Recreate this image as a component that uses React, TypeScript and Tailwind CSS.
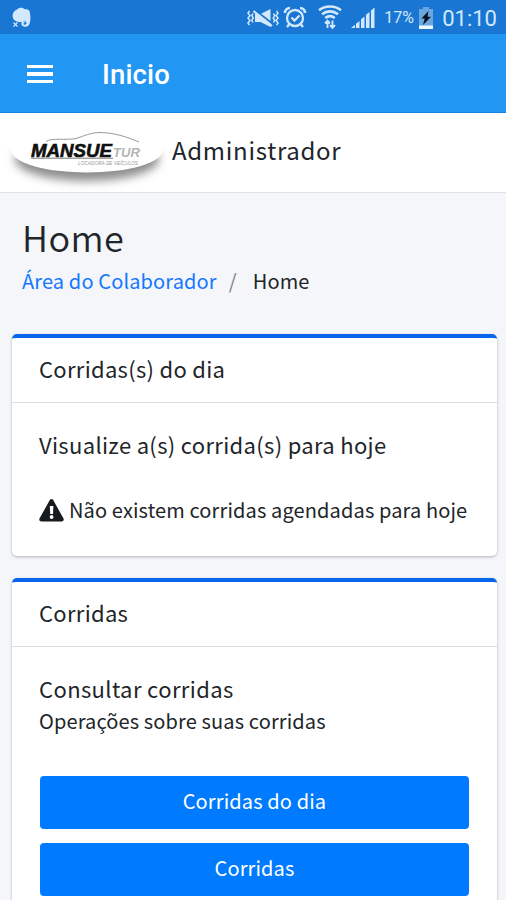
import type { ReactNode } from 'react';

function StatusBar() {
  return (
    <div className="flex h-[34px] items-center justify-between bg-[#1976d2] pl-3 pr-[9px] text-[#d3e8fc]">
      <svg viewBox="0 0 20 22" className="mt-0.5 h-[22px] w-5" fill="currentColor">
        <path d="M.6 8.800C.6 6.200 2.600 3 5.400 2.200 7.800.2 10.800.4 12.200 2c2.600 0 4.800.7 5.300 2.300 1.200 4 1.200 9.300.1 12.300-.7 2.400-2.500 3.200-4.600 3.100-2.400-.1-3.700-1.200-3.700-2.900 0-1.700 1.200-2.600 3.300-2.500v1.600c-1.200 0-1.600.9-.8 1.500 1 .6 2.700.1 2.700-1.300 0-1.500-1.600-2-2.600-2.600-.6 1.400-2 1.900-4.600 1.600C3.400 14.700.6 12.500.6 8.800z" />
        <path d="m1.500 15.500 4 4M5.500 15.500l-4 4" fill="none" stroke="currentColor" strokeWidth="1.200" />
      </svg>
      <div className="flex items-center">
        <svg viewBox="0 0 34 24" className="mt-1 h-6 w-[34px]" fill="none" stroke="currentColor" strokeWidth="1.500">
          <path d="M3.500 4 2 6.200l2 2.300-2 2.500 2 2.500-2 2.500 1.500 2M7 6.500 5.800 8.800l1.500 2.200-1.500 2.300L7 15.500" />
          <path d="M30.500 4 32 6.200l-2 2.300 2 2.500-2 2.500 2 2.500-1.500 2M27.500 6.500l1.200 2.300-1.500 2.200 1.500 2.300-1.200 2.200" />
          <path d="M9 7h5.500L24.500 2v18l-10-5H9z" fill="currentColor" stroke="none" />
          <path d="m9 3.200 18 13.800" stroke="#1976d2" strokeWidth="2" />
          <path d="m7.500 4 18.500 15" strokeWidth="2.200" />
        </svg>
        <svg viewBox="0 0 24 24" className="ml-[3px] h-6 w-6" fill="none" stroke="currentColor" strokeWidth="2.300">
          <circle cx="12" cy="13" r="8" />
          <path d="m8.500 12.500 3 3 5-5M6 19.500 4 22M18 19.500l2 2.500" />
          <path d="M2 8c0-3 2-5 5-5M22 8c0-3-2-5-5-5" strokeWidth="2.600" />
        </svg>
        <svg viewBox="0 0 26 26" className="ml-2.5 h-[26px] w-[26px]" fill="none" stroke="currentColor" strokeWidth="2.600">
          <path d="M2 6.200c6.300-5 15.700-5 22 0M5 10.200c4.700-3.800 11.300-3.800 16 0M8.200 14c3-2.300 6.600-2.300 9.600 0" />
          <path d="M10.500 24v-7M8 19.300l2.500-2.700 2.500 2.700M15.500 16.500v7M13 21.200l2.500 2.700 2.500-2.700" strokeWidth="1.900" />
        </svg>
        <svg viewBox="0 0 24 22" className="ml-2 mr-0.5 mt-0.5 h-[22px] w-6" fill="currentColor">
          <path d="M0 21 4 17.800V21zM5 16.700 8.500 14v7H5zM10 12.300l3.500-2.900V21H10zM15 7.800l3.500-2.900V21H15zM20 3.400 23.500.4V21H20z" />
        </svg>
        <span className="ml-[7px] mt-0.5 w-[31px] whitespace-nowrap font-[Roboto,sans-serif] text-[16px] leading-6">17%</span>
        <svg viewBox="0 0 14 22" className="ml-1 mt-0.5 h-[22px] w-3.5">
          <path d="M4 0h6v2h4v20H0V2h4z" fill="#68a7df" />
          <path d="M0 18.500h14V22H0z" fill="#edf7ff" />
          <path d="M9.500 4 2.500 11.500h3.200L4 18l8-8.300H8.500z" fill="#07121d" />
        </svg>
        <span className="ml-[9px] mt-1 whitespace-nowrap font-[Roboto,sans-serif] text-[22px] leading-7">01:10</span>
      </div>
    </div>
  );
}

function Toolbar() {
  return (
    <header className="flex h-[79px] items-center border-b border-[#1681e4] bg-[#2196f3] pl-[27px]">
      <button aria-label="Menu" className="mt-0.5 flex w-[26px] flex-col gap-1">
        <span className="h-[3.500px] bg-white" />
        <span className="h-[3.500px] bg-white" />
        <span className="h-[3.500px] bg-white" />
      </button>
      <h1 className="ml-[49px] mt-1 font-[Roboto,sans-serif] text-[27.500px] font-medium leading-8 tracking-[0.150px] text-white">Inicio</h1>
    </header>
  );
}

function Logo() {
  return (
    <svg viewBox="0 0 164 72" className="h-[72px] w-[164px]">
      <defs>
        <filter id="logo-shadow" x="-10%" y="-30%" width="120%" height="170%">
          <feGaussianBlur stdDeviation="5" />
        </filter>
        <clipPath id="logo-shadow-area">
          <path d="M0 28h164v44H0z" />
        </clipPath>
      </defs>
      <g clipPath="url(#logo-shadow-area)">
        <ellipse cx="83" cy="39" rx="72" ry="22" fill="#8c8c8c" filter="url(#logo-shadow)" />
      </g>
      <ellipse cx="83" cy="30" rx="76" ry="22.500" fill="#fff" />
      <path d="M42 21.500c6-4 20-1 30-3 8-2.500 15-6 24-6 14 .3 26 4 39 9.500" fill="none" stroke="#999" strokeWidth="1" />
      <text x="27" y="36.500" textLength="81" lengthAdjust="spacingAndGlyphs" fontFamily="Liberation Sans, sans-serif" fontSize="18" fontWeight="700" fontStyle="italic" fill="#101010" stroke="#101010" strokeWidth=".6">MANSUE</text>
      <text x="109" y="36.500" textLength="27" lengthAdjust="spacingAndGlyphs" fontFamily="Liberation Sans, sans-serif" fontSize="13" fontWeight="700" fontStyle="italic" fill="#b5b5b5">TUR</text>
      <path d="M27 38.200h82" stroke="#777" strokeWidth="1" />
      <text x="74" y="45" textLength="60" lengthAdjust="spacingAndGlyphs" fontFamily="Liberation Sans, sans-serif" fontSize="4.500" fontStyle="italic" fill="#999">LOCADORA DE VEÍCULOS</text>
    </svg>
  );
}

interface CardProps {
  title: string;
  children: ReactNode;
}

function Card({ title, children }: CardProps) {
  return (
    <section className="rounded-[5px] border-t-4 border-[#0866ed] bg-white shadow-[0_1px_3px_rgba(0,0,0,0.28)]">
      <h3 className="flex h-[65px] items-center border-b border-[#dcdfe1] px-[27px] pb-1 text-[22px] leading-8">
        <span className="tracking-[0.300px]">{title}</span>
      </h3>
      <div className="pl-[27px] pr-7">{children}</div>
    </section>
  );
}

export default function App() {
  return (
    <div className="h-[900px] overflow-hidden bg-[#f4f6f9] font-['Noto_Sans_CJK_SC',sans-serif] text-[#212529]">
      <StatusBar />
      <Toolbar />
      <div className="flex h-20 items-start border-b border-[#dee2e6] bg-white pl-1 pt-[7px]">
        <Logo />
        <span className="ml-1 mt-3.5 text-[24px] leading-8 tracking-[0.700px]">Administrador</span>
      </div>

      <div className="px-[23px] pt-[22px]">
        <h2 className="-ml-px text-[36px] font-[350] leading-[42px] tracking-[0.400px]">Home</h2>
        <nav className="mt-2 flex text-[20px] leading-8 tracking-[0.130px]">
          <a className="-ml-px text-[#1677ff]">Área do Colaborador</a>
          <span className="ml-3 text-[#7b8085]">/</span>
          <span className="ml-4">Home</span>
        </nav>
      </div>

      <main className="mt-[37px] flex flex-col gap-[22px] pl-3 pr-[9px]">
        <Card title="Corridas(s) do dia">
          <p className="pt-[25px] text-[22px] leading-8 tracking-[0.330px]">Visualize a(s) corrida(s) para hoje</p>
          <p className="mt-[34px] flex items-center pb-[30px] text-[20px] leading-8 tracking-[0.130px]">
            <svg viewBox="0 0 25 23" className="mr-[5px] h-[23px] w-[25px] shrink-0">
              <path d="M10.800 1.100c.8-1.400 2.600-1.400 3.400 0l10.200 18.200c.9 1.600-.1 3.200-1.900 3.200h-20c-1.800 0-2.800-1.600-1.900-3.200z" fill="#171b1f" />
              <path d="M10.800 7h3.600l-.4 8h-2.800z" fill="#fff" />
              <circle cx="12.600" cy="18" r="1.900" fill="#fff" />
            </svg>
            <span className="whitespace-nowrap">Não existem corridas agendadas para hoje</span>
          </p>
        </Card>
        <Card title="Corridas">
          <p className="pt-[25px] text-[22px] leading-8 tracking-[0.380px]">Consultar corridas</p>
          <p className="pt-px text-[20px] leading-8 tracking-[0.130px]">Operações sobre suas corridas</p>
          <div className="ml-px mt-[39px] flex flex-col gap-3.5 pb-7">
            <button className="h-[53px] rounded-[4px] bg-[#007bff] pb-[3px] text-[20px] leading-8 tracking-[0.130px] text-white">Corridas do dia</button>
            <button className="h-[53px] rounded-[4px] bg-[#007bff] pb-[3px] text-[20px] leading-8 tracking-[0.130px] text-white">Corridas</button>
          </div>
        </Card>
      </main>
    </div>
  );
}
